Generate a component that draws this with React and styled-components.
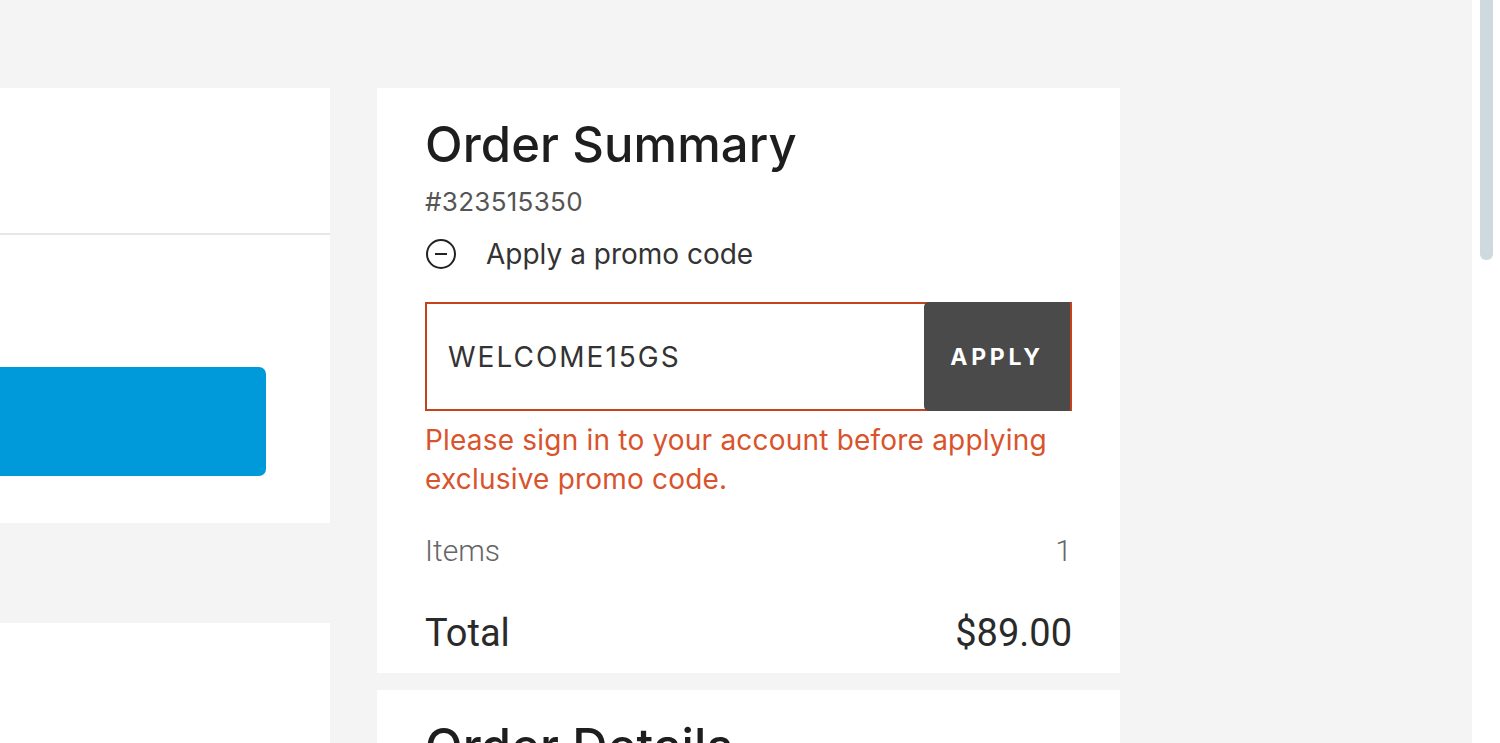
import React from "react";
import styled, { createGlobalStyle } from "styled-components";

const Global = createGlobalStyle`
  html, body { margin: 0; padding: 0; height: 100%; overflow: hidden; }
  body { background: #f4f4f4; font-family: Inter, "Noto Sans", sans-serif; color: #222; }
  #root { height: 100%; }
`;

const Page = styled.div`
  display: flex;
  height: 743px;
  overflow: hidden;
`;

const Main = styled.div`
  flex: 1;
  display: flex;
  gap: 47px;
  padding-top: 88px;
  background: #f4f4f4;
  overflow: hidden;
`;

const LeftCol = styled.div`
  width: 330px;
  display: flex;
  flex-direction: column;
  gap: 100px;
`;

const LeftCard = styled.div`
  background: #fff;
  height: ${(p) => p.$h}px;
  flex-shrink: 0;
`;

const LeftTop = styled.div`
  height: 145px;
  border-bottom: 2px solid #e6e6e6;
`;

const LeftBody = styled.div`
  padding: 132px 64px 47px 0;
`;

const BlueButton = styled.div`
  height: 109px;
  background: #009ada;
  border-radius: 0 7px 7px 0;
`;

const RightCol = styled.div`
  width: 743px;
  display: flex;
  flex-direction: column;
  gap: 17px;
`;

const Card = styled.div`
  background: #fff;
  padding: ${(p) => p.$pad || "0 48px"};
  flex-shrink: 0;
`;

const Title = styled.h2`
  margin: 0;
  font-family: Inter, sans-serif;
  font-weight: 500;
  font-size: 49px;
  line-height: 56px;
  letter-spacing: 0.1px;
  color: #1e1e1e;
`;

const OrderNo = styled.div`
  font-size: 26px;
  line-height: 30px;
  letter-spacing: 0.3px;
  color: #555;
  margin-top: 14px;
`;

const PromoToggle = styled.div`
  display: flex;
  align-items: center;
  gap: 29px;
  margin-top: 19px;
  font-size: 28px;
  line-height: 36px;
  color: #333;
`;

const InputRow = styled.div`
  display: flex;
  height: 109px;
  margin-top: 30px;
  border: 2px solid #c4421e;
  box-sizing: border-box;
`;

const CodeInput = styled.div`
  flex: 1;
  display: flex;
  align-items: center;
  padding-left: 21px;
  font-size: 28px;
  letter-spacing: 2px;
  color: #333;
`;

const ApplyButton = styled.div`
  width: 146px;
  display: flex;
  align-items: center;
  justify-content: center;
  background: #4a4a4a;
  color: #fff;
  font-weight: 700;
  font-size: 23px;
  letter-spacing: 3.7px;
  border-radius: 5px 0 0 5px;
  margin: -2px 0 -2px 0;
`;

const ErrorText = styled.div`
  margin-top: 10px;
  font-size: 28px;
  line-height: 39px;
  letter-spacing: 0.2px;
  color: #d9532c;
`;

const Row = styled.div`
  display: flex;
  justify-content: space-between;
  align-items: center;
  font-family: Roboto, sans-serif;
  font-weight: ${(p) => p.$weight || 400};
  font-size: ${(p) => p.$size}px;
  color: ${(p) => p.$color};
  margin-top: ${(p) => p.$mt}px;
  line-height: ${(p) => p.$lh}px;
`;

const ScrollTrack = styled.div`
  width: 28px;
  background: #fff;
  display: flex;
  justify-content: center;
`;

const Thumb = styled.div`
  width: 13px;
  height: 260px;
  background: #cfd9e0;
  border-radius: 0 0 6px 6px;
`;

const MinusCircle = () => (
  <svg width="32" height="32" viewBox="0 0 32 32" fill="none" stroke="#222" strokeWidth="2">
    <circle cx="16" cy="16" r="14" />
    <line x1="10" y1="16" x2="22" y2="16" />
  </svg>
);

export default function App() {
  return (
    <Page>
      <Global />
      <Main>
        <LeftCol>
          <LeftCard>
            <LeftTop />
            <LeftBody>
              <BlueButton />
            </LeftBody>
          </LeftCard>
          <LeftCard $h={200} />
        </LeftCol>
        <RightCol>
          <Card $pad="29px 48px 18px">
            <Title>Order Summary</Title>
            <OrderNo>#323515350</OrderNo>
            <PromoToggle>
              <MinusCircle />
              <span>Apply a promo code</span>
            </PromoToggle>
            <InputRow>
              <CodeInput>WELCOME15GS</CodeInput>
              <ApplyButton>APPLY</ApplyButton>
            </InputRow>
            <ErrorText>
              Please sign in to your account before applying exclusive promo code.
            </ErrorText>
            <Row $size={30} $weight={300} $color="#666" $mt={34} $lh={36}>
              <span>Items</span>
              <span>1</span>
            </Row>
            <Row $size={38} $color="#2a2a2a" $mt={42} $lh={44}>
              <span>Total</span>
              <span>$89.00</span>
            </Row>
          </Card>
          <Card $pad="29px 48px 40px">
            <Title>Order Details</Title>
          </Card>
        </RightCol>
      </Main>
      <ScrollTrack>
        <Thumb />
      </ScrollTrack>
    </Page>
  );
}
